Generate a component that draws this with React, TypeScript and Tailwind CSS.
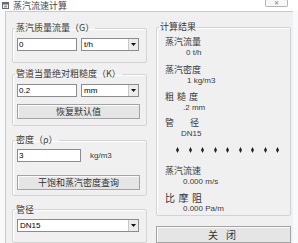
import type { ReactNode } from 'react'

const cn = "font-['Noto_Sans_CJK_SC',sans-serif]"
const lat = "font-['Liberation_Sans','Noto_Sans_CJK_SC',sans-serif]"

function Group({ title, className, children }: { title: string; className?: string; children?: ReactNode }) {
  return (
    <fieldset className={`rounded-[2px] border border-[#d3d3d3] px-[4px] shadow-[inset_1px_1px_0_#fff] ${className ?? ''}`}>
      <legend className={`ml-[-2px] px-[1px] text-[9px] leading-[10px] text-[#383838] ${cn}`}>{title}</legend>
      {children}
    </fieldset>
  )
}

function TextBox({ value, width }: { value: string; width: string }) {
  return (
    <input
      readOnly
      defaultValue={value}
      className={`h-[13px] ${width} border border-[#8c8c8c] bg-white pl-[1px] text-[8px] leading-[11px] text-black outline-none ${lat}`}
    />
  )
}

function Combo({ value, width }: { value: string; width: string }) {
  return (
    <div className={`flex h-[13px] ${width} border border-[#8c8c8c] bg-white`}>
      <span className={`flex-1 pl-[2px] text-[8px] leading-[11px] text-black ${lat}`}>{value}</span>
      <span className="flex w-[10px] items-center justify-center border-l border-[#c8c8c8] bg-[#ececec]">
        <svg width="5" height="3" viewBox="0 0 5 3">
          <path d="M0 0h5L2.5 3z" fill="#111" />
        </svg>
      </span>
    </div>
  )
}

function Btn({ label, className }: { label: string; className?: string }) {
  return (
    <button
      className={`flex items-center justify-center border border-[#a3a3a3] bg-[#e5e5e5] text-[9px] text-[#333] shadow-[inset_1px_1px_0_#fafafa] ${cn} ${className ?? ''}`}
    >
      {label}
    </button>
  )
}

function Label({ children, className }: { children: ReactNode; className?: string }) {
  return <div className={`pl-[4px] text-[9px] leading-[10px] text-[#383838] ${cn} ${className ?? ''}`}>{children}</div>
}

function Value({ children, className }: { children: ReactNode; className?: string }) {
  return <div className={`h-[11px] text-[8px] leading-[11px] text-[#3a3a3a] ${lat} ${className ?? ''}`}>{children}</div>
}

export default function App() {
  return (
    <div className="h-[243px] w-[298px] overflow-hidden bg-[#f7f9fb]">
      {/* Title bar */}
      <div className="flex h-[11px] items-center bg-white">
        <svg className="ml-[2px]" width="7" height="7" viewBox="0 0 7 7">
          <rect x="0.5" y="0.5" width="6" height="6" fill="#f4f4f4" stroke="#6b6b6b" />
          <rect x="1" y="1" width="5" height="1.5" fill="#3d6fb0" />
          <rect x="2" y="3.5" width="3" height="2" fill="#9a9a9a" />
        </svg>
        <span className={`ml-[4px] text-[9px] leading-[11px] text-[#444] ${cn}`}>蒸汽流速计算</span>
        <div className="mb-auto ml-auto mr-[10px] flex h-[7px] w-[23px] items-center justify-center rounded-b-[2px] border border-t-0 border-[#b5b5b5] bg-[#f7f7f7]">
          <span className="text-[6px] leading-[6px] text-[#777]">✕</span>
        </div>
      </div>

      <div className="ml-[5px] flex h-[232px] w-[288px] border-l border-t border-[#c9c9c9] bg-[#f0f0f0] pl-[6px]">
        {/* Left column */}
        <div className="flex w-[135px] flex-col pt-[11px]">
          <Group title="蒸汽质量流量（G）" className="h-[42px]">
            <div className="mt-[5px] flex gap-[4px]">
              <TextBox value="0" width="w-[60px]" />
              <Combo value="t/h" width="w-[58px]" />
            </div>
          </Group>

          <Group title="管道当量绝对粗糙度（K）" className="mt-[6px] h-[59px]">
            <div className="mt-[5px] flex gap-[4px]">
              <TextBox value="0.2" width="w-[60px]" />
              <Combo value="mm" width="w-[58px]" />
            </div>
            <Btn label="恢复默认值" className="mt-[7px] h-[15px] w-[123px]" />
          </Group>

          <Group title="密度（ρ）" className="mt-[9px] h-[63px]">
            <div className="mt-[4px] flex items-center gap-[9px]">
              <TextBox value="3" width="w-[64px]" />
              <span className={`text-[8px] text-[#3a3a3a] ${lat}`}>kg/m3</span>
            </div>
            <Btn label="干饱和蒸汽密度查询" className="mt-[13px] h-[15px] w-[123px]" />
          </Group>

          <Group title="管径" className="mt-[9px] h-[40px]">
            <div className="mt-[4px]">
              <Combo value="DN15" width="w-[122px]" />
            </div>
          </Group>
        </div>

        {/* Right column */}
        <div className="ml-[9px] flex w-[135px] flex-col pt-[10px]">
          <Group title="计算结果" className="h-[200px]">
            <Label className="mt-[5px]">蒸汽流量</Label>
            <Value className="pl-[25px]">0 t/h</Value>
            <Label className="mt-[7px]">蒸汽密度</Label>
            <Value className="pl-[26px]">1 kg/m3</Value>
            <Label className="mt-[5px] h-[11px] leading-[11px] tracking-[3px]">粗糙度</Label>
            <Value className="pl-[22px]">.2 mm</Value>
            <Label className="mt-[5px] flex">
              <span>管</span>
              <span className="ml-[16px]">径</span>
            </Label>
            <Value className="pl-[20px]">DN15</Value>
            <div className="mt-[6px] flex h-[10px] w-[118px] items-center justify-between pl-[15px]">
              {Array.from({ length: 9 }).map((_, i) => (
                <svg key={i} width="3" height="6" viewBox="0 0 3 6">
                  <path d="M1.5 0L3 3L1.5 6L0 3z" fill="#222" />
                </svg>
              ))}
            </div>
            <Label className="mt-[10px] h-[11px] leading-[11px]">蒸汽流速</Label>
            <Value className="pl-[22px]">0.000 m/s</Value>
            <Label className="mt-[5px] h-[11px] text-[10px] leading-[11px] tracking-[3.5px]">比摩阻</Label>
            <Value className="pl-[22px]">0.000 Pa/m</Value>
          </Group>
          <Btn label="关 闭" className="mt-[10px] h-[18px] w-[135px] text-[10px] tracking-[3px]" />
        </div>
      </div>
    </div>
  )
}
